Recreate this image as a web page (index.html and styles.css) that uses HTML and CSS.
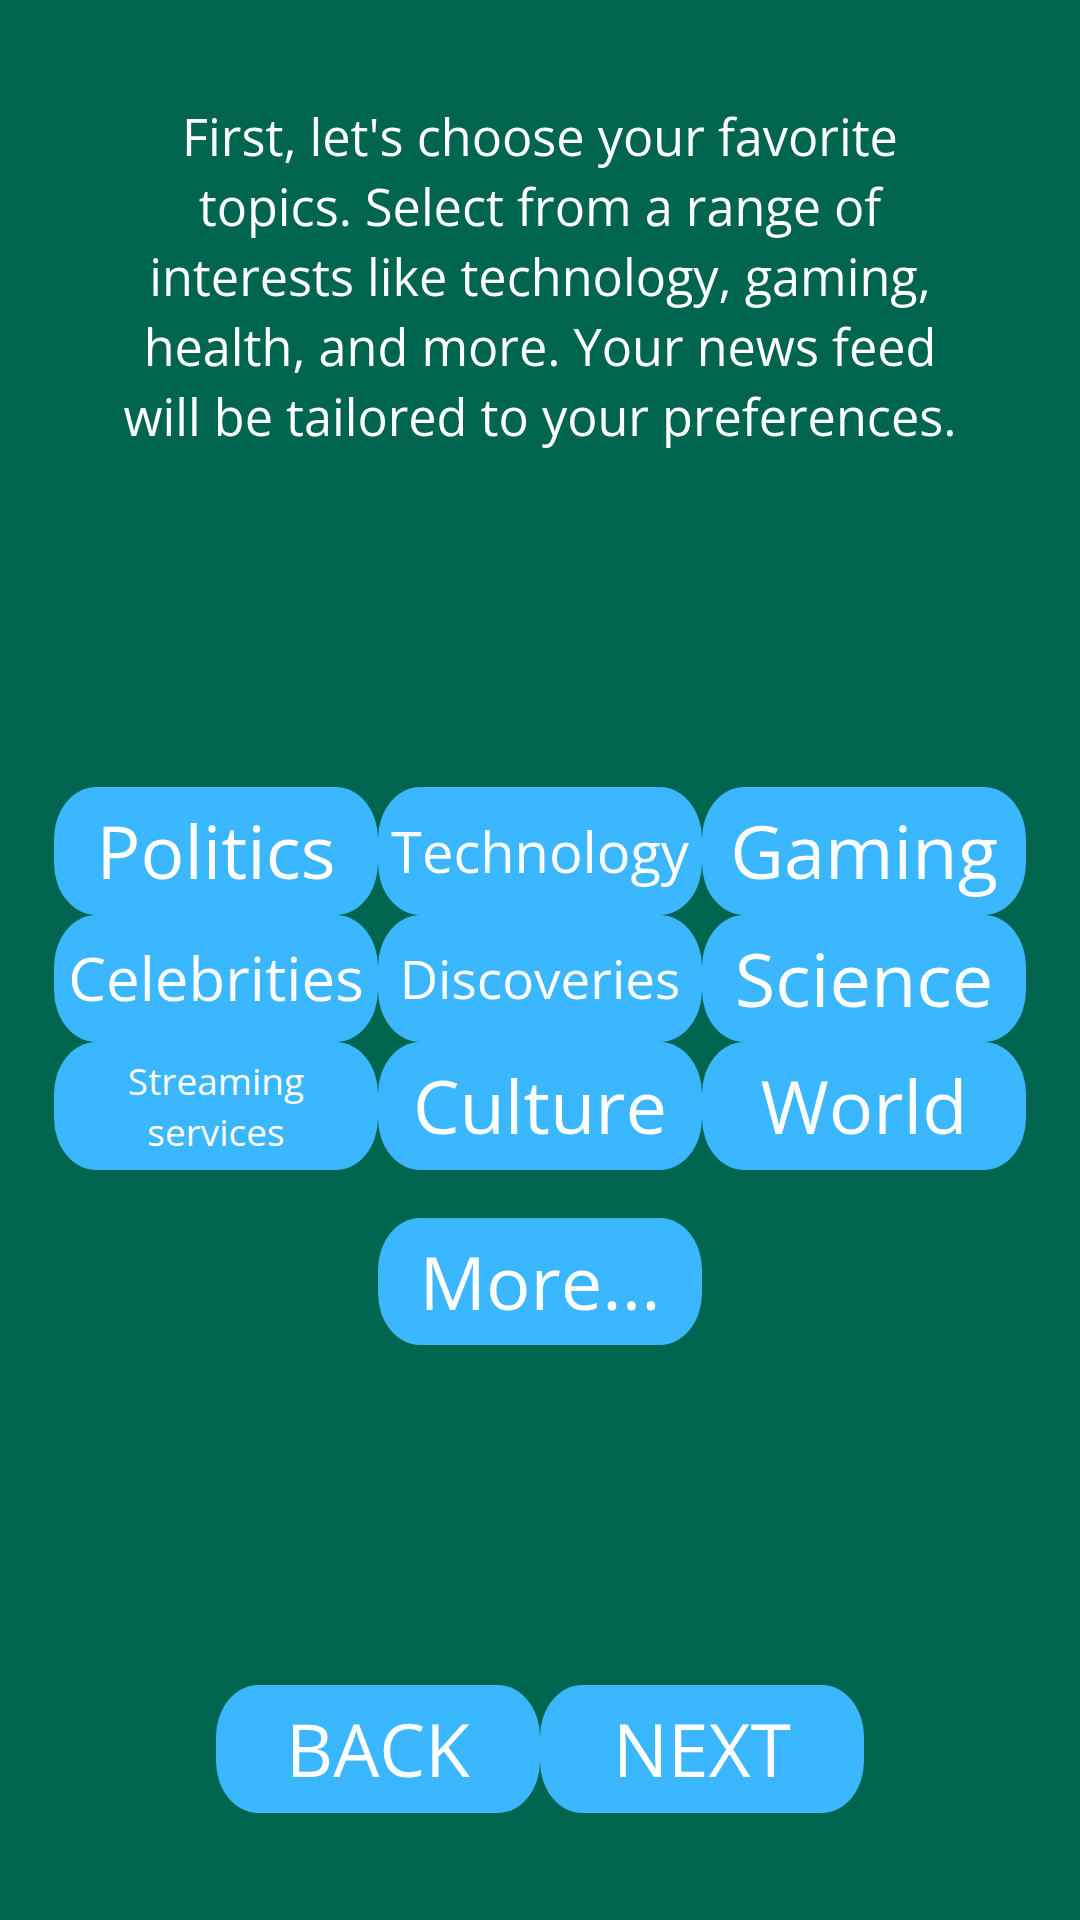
FILE: index.html
```html
<!DOCTYPE html>
<html lang="en">
<head>
<meta charset="utf-8">
<title>Choose topics</title>
<link rel="stylesheet" href="styles.css">
</head>
<body>
<main class="screen">
  <p class="intro">First, let's choose your favorite topics. Select from a range of interests like technology, gaming, health, and more. Your news feed will be tailored to your preferences.</p>
  <div class="topics">
    <button class="pill fs-73">Politics</button>
    <button class="pill fs-56">Technology</button>
    <button class="pill fs-74">Gaming</button>
    <button class="pill fs-60">Celebrities</button>
    <button class="pill fs-53">Discoveries</button>
    <button class="pill fs-74">Science</button>
    <button class="pill fs-37 two-line">Streaming<br>services</button>
    <button class="pill fs-74">Culture</button>
    <button class="pill fs-74">World</button>
  </div>
  <div class="more-row">
    <button class="pill fs-74">More...</button>
  </div>
  <div class="nav-row">
    <button class="pill fs-73">BACK</button>
    <button class="pill fs-73">NEXT</button>
  </div>
</main>
</body>
</html>
```

FILE: styles.css
```css
html, body {
  margin: 0;
  padding: 0;
}
body {
  background: #00654f;
  font-family: "Open Sans", "Noto Sans", sans-serif;
  color: #ffffff;
}
.screen {
  width: 1080px;
  height: 1920px;
  display: flex;
  flex-direction: column;
  align-items: center;
}
.intro {
  margin: 102px 0 0;
  width: 850px;
  height: 350px;
  text-align: center;
  font-size: 50.4px;
  line-height: 70px;
}
.topics {
  margin-top: 335px;
  display: grid;
  grid-template-columns: repeat(3, 324px);
  grid-auto-rows: 127.5px;
}
.pill {
  width: 324px;
  height: 127.5px;
  border: none;
  padding: 0;
  margin: 0;
  background: #3bb7ff;
  color: #ffffff;
  font-family: "Open Sans", "Noto Sans", sans-serif;
  border-radius: 42px / 52px;
  display: flex;
  align-items: center;
  justify-content: center;
  text-align: center;
  line-height: normal;
  white-space: nowrap;
}
.more-row {
  margin-top: 48px;
  display: flex;
}
.nav-row {
  margin-top: 340px;
  display: flex;
}
.fs-37 { font-size: 37px; }
.fs-53 { font-size: 53px; }
.fs-56 { font-size: 56px; }
.fs-60 { font-size: 60px; }
.fs-73 { font-size: 73px; }
.fs-74 { font-size: 74px; }
```
